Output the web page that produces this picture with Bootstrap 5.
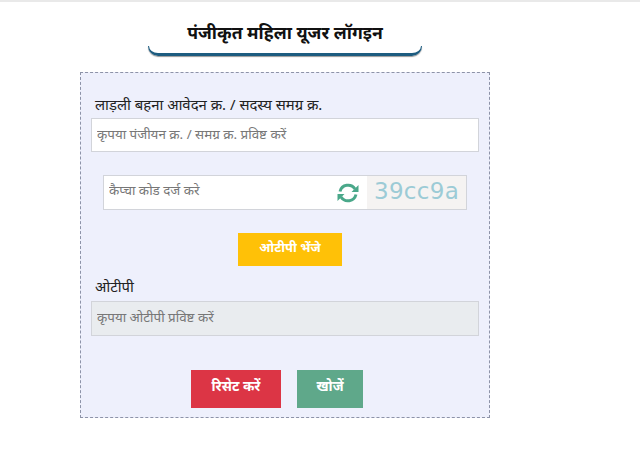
<!DOCTYPE html>
<html lang="hi"><head><meta charset="utf-8">
<link href="https://cdn.jsdelivr.net/npm/bootstrap@5.3.0/dist/css/bootstrap.min.css" rel="stylesheet">
<style>
body{font-family:"Noto Sans","Liberation Sans",sans-serif;background:#fff;color:#222;border-top:2px solid #e9e9e9;min-height:456px;overflow:hidden}
.head-wrap{width:274px;margin:0 0 0 148px;height:54px;padding-top:15px;text-align:center;position:relative}
.head-wrap h1{font-size:17.6px;font-weight:700;color:#111;line-height:30px;margin:0}
.head-curve{height:10px;margin-top:-1px;border:solid #1d5c80;border-width:0 1px 3px;border-radius:0 0 14px 14px;box-shadow:0 1px 1px #999}
.panel{width:410px;height:346px;margin:16px 0 0 80px;background:#eef0fc;border:1px dashed #8d93a8;padding:19px 10px 0}
.lbl{font-size:14.9px;line-height:24px;height:24px;margin:0 0 2px 4px;color:#222}
.fld{height:34px;border-radius:0;border:1px solid #d2d4da;font-size:13.4px;padding:0 5px 3px;color:#666}
.fld::placeholder{color:#777}
.cap{width:364px;height:35px;margin:23px 0 0 12px;background:#fff;border:1px solid #d2d4da}
.cap input{border:0;outline:0;font-size:13.4px;padding:0 5px 6px;flex:1;min-width:0;height:100%;background:transparent}
.cap input::placeholder{color:#777}
.cap-txt{width:99px;height:100%;background:#f5f3f2;color:#9ccbd6;font:23px/31px "DejaVu Sans",sans-serif;letter-spacing:.3px;text-align:center}
.cap svg{margin-right:7px}
.send-row{padding-left:10px}
.send{width:104px;height:33px;margin-top:23px;padding:0 0 4px;background:#ffc107;color:#fff;border:0;border-radius:0;font-size:13px;font-weight:700}
.otp{margin-top:8px}
.otp .lbl{margin-bottom:3px}
.otp .fld{background:#e9ecef;height:35px}
.acts{margin-top:34px;gap:16px;padding-right:16px}
.acts .btn{height:38px;padding:0 0 6px;border:0;border-radius:0;color:#fff;font-size:13.8px;font-weight:700}
.b-r{width:90px;background:#dc3545}
.b-g{width:66px;background:#5fa88a}
</style></head><body>
<div class="head-wrap"><h1>पंजीकृत महिला यूजर लॉगइन</h1><div class="head-curve"></div></div>
<form class="panel">
<div class="lbl">लाड़ली बहना आवेदन क्र. / सदस्य समग्र क्र.</div>
<input class="form-control fld" placeholder="कृपया पंजीयन क्र. / समग्र क्र. प्रविष्ट करें">
<div class="cap d-flex align-items-center">
<input placeholder="कैप्चा कोड दर्ज करे">
<svg width="24" height="24" viewBox="0 0 24 24" fill="none" stroke="#4aa88a" stroke-width="3"><path d="M4 10.5A8.300 8.300 0 0 1 19 8"/><path d="M20 13.500A8.300 8.300 0 0 1 5 16"/><path d="M22.500 4v7h-7z M1.500 20v-7h7z" fill="#4aa88a" stroke="none"/></svg>
<div class="cap-txt">39cc9a</div>
</div>
<div class="text-center send-row"><button type="button" class="btn send">ओटीपी भेंजे</button></div>
<div class="otp"><div class="lbl">ओटीपी</div>
<input class="form-control fld" disabled placeholder="कृपया ओटीपी प्रविष्ट करें"></div>
<div class="acts d-flex justify-content-center">
<button type="button" class="btn b-r">रिसेट करें</button>
<button type="button" class="btn b-g">खोजें</button>
</div>
</form>
<script src="https://cdn.jsdelivr.net/npm/bootstrap@5.3.0/dist/js/bootstrap.bundle.min.js"></script>
</body></html>
